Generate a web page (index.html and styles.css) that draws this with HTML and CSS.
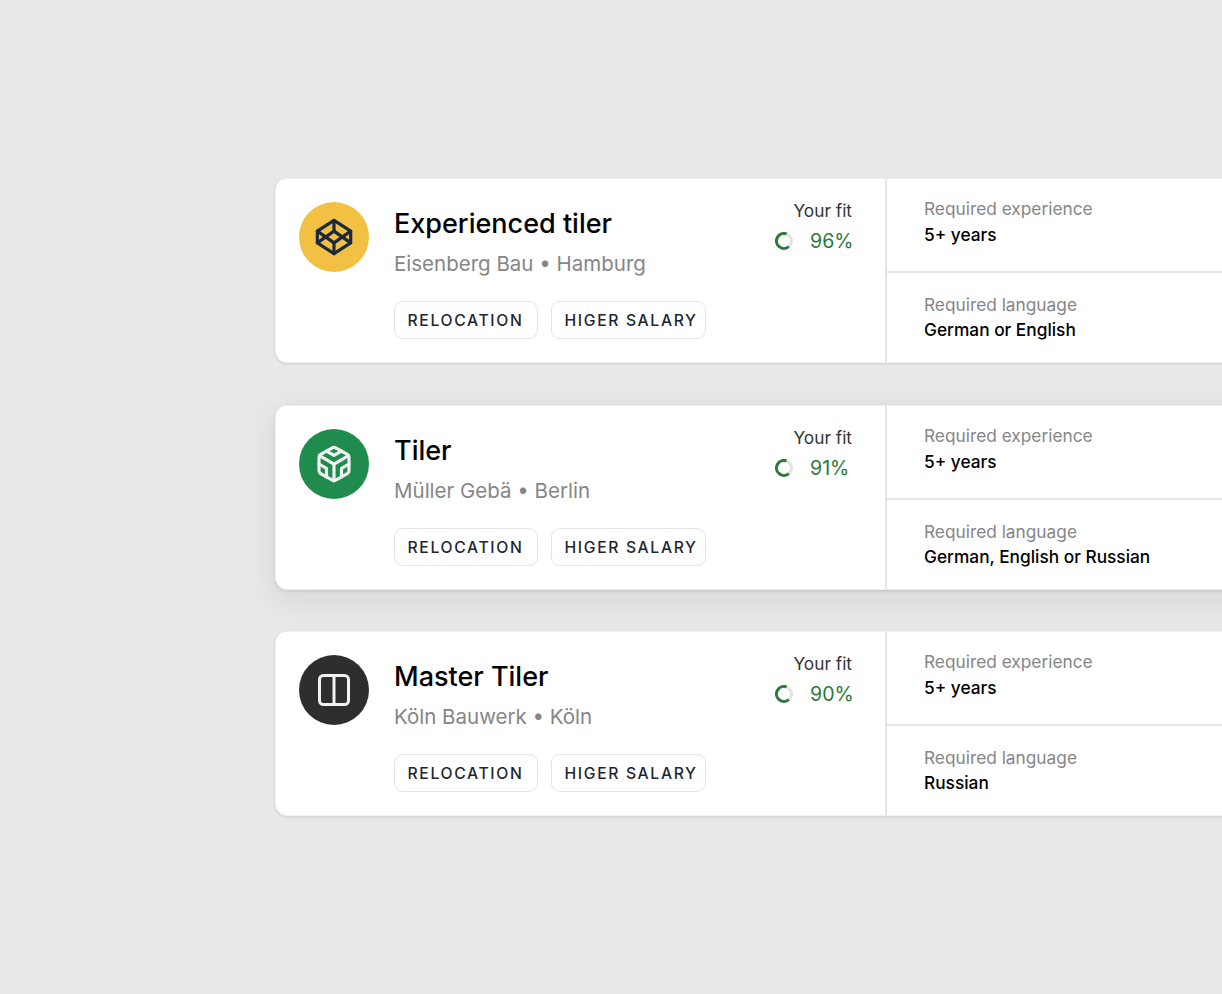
FILE: index.html
```html
<!DOCTYPE html>
<html lang="en">
<head>
  <meta charset="UTF-8">
  <title>Job matches</title>
  <link rel="stylesheet" href="styles.css">
</head>
<body>

<div class="job-list">

  <div class="job-card">
    <div class="job-main">
      <div class="logo logo-yellow">
        <svg class="logo-icon" viewBox="0 0 24 24" fill="none" stroke="#1b2a3d" stroke-width="1.9" stroke-linejoin="round" stroke-linecap="round">
          <polygon points="12 2 22 8.5 22 15.5 12 22 2 15.5 2 8.5"/>
          <line x1="12" y1="22" x2="12" y2="15.5"/>
          <polyline points="22 8.5 12 15.5 2 8.5"/>
          <polyline points="2 15.5 12 8.5 22 15.5"/>
          <line x1="12" y1="2" x2="12" y2="8.5"/>
        </svg>
      </div>
      <div class="job-info">
        <h2 class="job-title">Experienced tiler</h2>
        <div class="job-company">Eisenberg Bau • Hamburg</div>
        <div class="tags">
          <span class="tag tag-relocation">RELOCATION</span>
          <span class="tag tag-salary">HIGER SALARY</span>
        </div>
      </div>
      <div class="fit">
        <div class="fit-label">Your fit</div>
        <div class="fit-score">
          <svg class="ring" viewBox="0 0 18 18" fill="none" stroke-width="3">
            <circle cx="9" cy="9" r="7.5" stroke="#e3e3e3"/>
            <path d="M11.6 1.95A7.5 7.5 0 1 0 13.8 14.7" stroke="#2b7a3a"/>
          </svg>
          <span>96%</span>
        </div>
      </div>
    </div>
    <div class="job-reqs">
      <div class="req">
        <div class="req-label">Required experience</div>
        <div class="req-value">5+ years</div>
      </div>
      <div class="req">
        <div class="req-label">Required language</div>
        <div class="req-value">German or English</div>
      </div>
    </div>
  </div>

  <div class="job-card job-card-active">
    <div class="job-main">
      <div class="logo logo-green">
        <svg class="logo-icon" viewBox="0 0 24 24" fill="none" stroke="#f1f1f1" stroke-width="1.9" stroke-linejoin="round" stroke-linecap="round">
          <path d="M21 16V8a2 2 0 0 0-1-1.73l-7-4a2 2 0 0 0-2 0l-7 4A2 2 0 0 0 3 8v8a2 2 0 0 0 1 1.73l7 4a2 2 0 0 0 2 0l7-4A2 2 0 0 0 21 16z"/>
          <polyline points="7.5 4.21 12 6.81 16.5 4.21"/>
          <polyline points="7.5 19.79 7.5 14.6 3 12"/>
          <polyline points="21 12 16.5 14.6 16.5 19.79"/>
          <polyline points="3.27 6.96 12 12.01 20.73 6.96"/>
          <line x1="12" y1="22.08" x2="12" y2="12"/>
        </svg>
      </div>
      <div class="job-info">
        <h2 class="job-title">Tiler</h2>
        <div class="job-company">Müller Gebä • Berlin</div>
        <div class="tags">
          <span class="tag tag-relocation">RELOCATION</span>
          <span class="tag tag-salary">HIGER SALARY</span>
        </div>
      </div>
      <div class="fit">
        <div class="fit-label">Your fit</div>
        <div class="fit-score">
          <svg class="ring" viewBox="0 0 18 18" fill="none" stroke-width="3">
            <circle cx="9" cy="9" r="7.5" stroke="#e3e3e3"/>
            <path d="M11.6 1.95A7.5 7.5 0 1 0 13.8 14.7" stroke="#2b7a3a"/>
          </svg>
          <span>91%</span>
        </div>
      </div>
    </div>
    <div class="job-reqs">
      <div class="req">
        <div class="req-label">Required experience</div>
        <div class="req-value">5+ years</div>
      </div>
      <div class="req">
        <div class="req-label">Required language</div>
        <div class="req-value">German, English or Russian</div>
      </div>
    </div>
  </div>

  <div class="job-card">
    <div class="job-main">
      <div class="logo logo-dark">
        <svg class="logo-icon" viewBox="0 0 40 40" fill="none" stroke="#f1f1f1" stroke-width="3" stroke-linejoin="round">
          <rect x="5.5" y="5.5" width="29" height="29" rx="4"/>
          <line x1="20" y1="5.5" x2="20" y2="34.5"/>
        </svg>
      </div>
      <div class="job-info">
        <h2 class="job-title">Master Tiler</h2>
        <div class="job-company">Köln Bauwerk • Köln</div>
        <div class="tags">
          <span class="tag tag-relocation">RELOCATION</span>
          <span class="tag tag-salary">HIGER SALARY</span>
        </div>
      </div>
      <div class="fit">
        <div class="fit-label">Your fit</div>
        <div class="fit-score">
          <svg class="ring" viewBox="0 0 18 18" fill="none" stroke-width="3">
            <circle cx="9" cy="9" r="7.5" stroke="#e3e3e3"/>
            <path d="M11.6 1.95A7.5 7.5 0 1 0 13.8 14.7" stroke="#2b7a3a"/>
          </svg>
          <span>90%</span>
        </div>
      </div>
    </div>
    <div class="job-reqs">
      <div class="req">
        <div class="req-label">Required experience</div>
        <div class="req-value">5+ years</div>
      </div>
      <div class="req">
        <div class="req-label">Required language</div>
        <div class="req-value">Russian</div>
      </div>
    </div>
  </div>

</div>

</body>
</html>
```

FILE: styles.css
```css
html, body {
  margin: 0;
  height: 100%;
  overflow: hidden;
}
body {
  font-family: Inter, "Liberation Sans", sans-serif;
  background: #e8e8e8;
}
.job-list {
  display: flex;
  flex-direction: column;
  gap: 41.5px;
  width: 947px;
  padding: 178px 0 60px 275px;
  overflow: hidden;
}
.job-card {
  display: flex;
  height: 185px;
  width: 1000px;
  box-sizing: border-box;
  background: #fff;
  border: 1px solid #f0f0f0;
  border-radius: 12px;
  box-shadow: 0 1px 3px rgba(0,0,0,0.1);
}
.job-card-active {
  box-shadow: 0 1px 3px rgba(0,0,0,0.1), 0 8px 32px rgba(0,0,0,0.09);
}
.job-main {
  display: flex;
  width: 611px;
  flex-shrink: 0;
  box-sizing: border-box;
  padding: 23px 33px 0 23px;
  border-right: 2px solid #e5e5e5;
}
.logo {
  display: flex;
  justify-content: center;
  align-items: center;
  width: 70px;
  height: 70px;
  border-radius: 50%;
  flex-shrink: 0;
}
.logo-yellow { background: #f2c144; }
.logo-green { background: #1f8c4d; }
.logo-dark { background: #2e2e2e; }
.logo-icon {
  width: 40px;
  height: 40px;
}
.job-info {
  flex: 1;
  margin-left: 25px;
}
.job-title {
  margin: 0;
  padding-top: 4px;
  font-size: 27px;
  line-height: 36px;
  font-weight: 500;
  color: #000;
}
.job-company {
  margin-top: 8px;
  font-size: 20.5px;
  line-height: 28px;
  color: #868686;
}
.tags {
  display: flex;
  gap: 13px;
  margin-top: 23px;
}
.tag {
  box-sizing: border-box;
  height: 38px;
  padding-left: 12.5px;
  line-height: 37px;
  border: 1.5px solid #e4e4e4;
  border-radius: 9px;
  font-size: 15.7px;
  font-weight: 450;
  letter-spacing: 1.65px;
  white-space: nowrap;
  color: #1d2733;
}
.tag-relocation { width: 144px; }
.tag-salary { width: 155px; }
.fit {
  display: flex;
  flex-direction: column;
  align-items: flex-end;
}
.fit-label {
  margin-top: -2px;
  font-size: 17.3px;
  line-height: 22px;
  color: #333;
}
.fit-score {
  display: flex;
  align-items: center;
  gap: 17px;
  width: 77px;
  margin-top: 6px;
  font-size: 19.6px;
  line-height: 26px;
  color: #2b7a3a;
}
.ring {
  width: 18px;
  height: 18px;
  flex-shrink: 0;
}
.job-reqs {
  flex: 1;
  display: flex;
  flex-direction: column;
}
.req {
  height: 92px;
  box-sizing: border-box;
  padding: 19px 0 0 37px;
}
.req + .req {
  flex: 1;
  padding-top: 21px;
  border-top: 2px solid #e5e5e5;
}
.req-label {
  font-size: 17.3px;
  line-height: 22px;
  color: #868686;
}
.req-value {
  margin-top: 4px;
  font-size: 17.3px;
  line-height: 22px;
  font-weight: 500;
  color: #000;
}
.req + .req .req-value {
  margin-top: 3px;
}
```
